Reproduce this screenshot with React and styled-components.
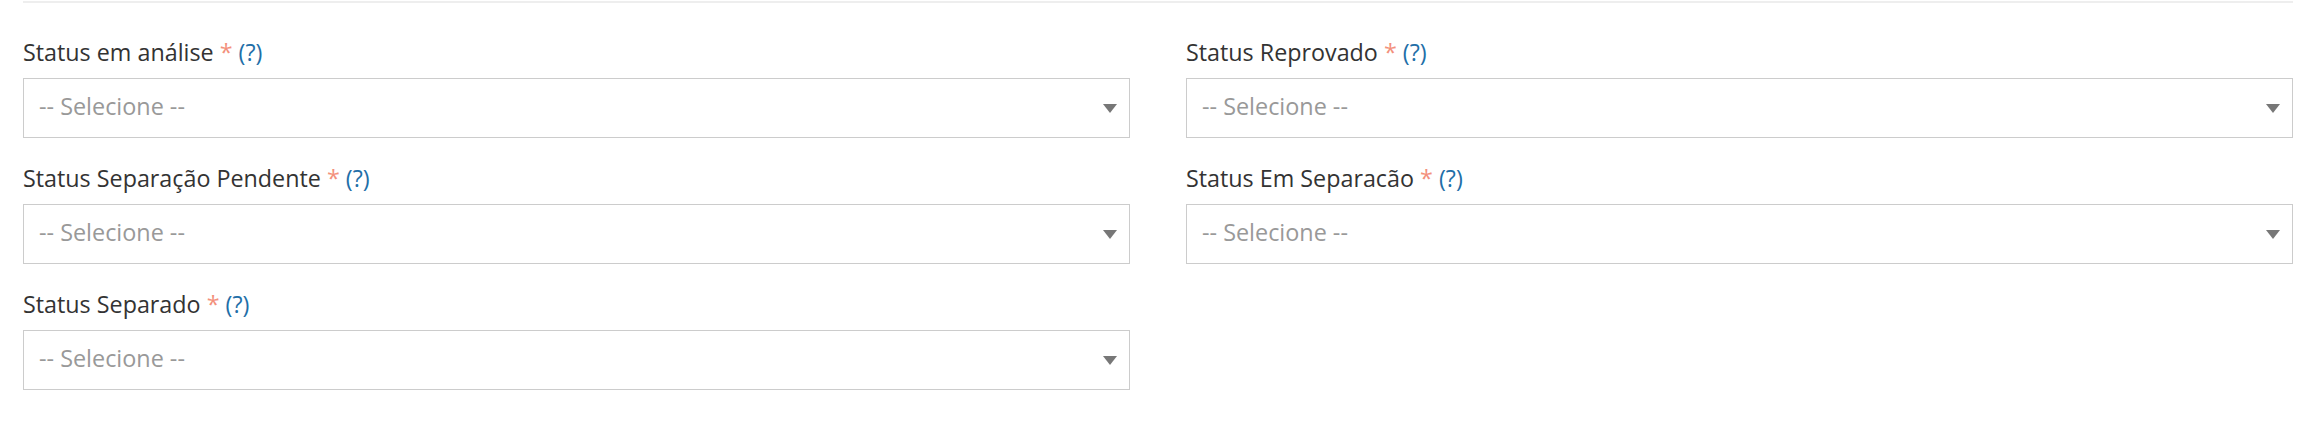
import React from 'react'
import styled, { createGlobalStyle } from 'styled-components'

const GlobalStyle = createGlobalStyle`
  html, body {
    margin: 0;
    padding: 0;
    background: #fff;
    font-family: "Open Sans", "Noto Sans", sans-serif;
  }
`

const fields = [
  'Status em análise',
  'Status Reprovado',
  'Status Separação Pendente',
  'Status Em Separacão',
  'Status Separado',
]

export default function App() {
  return (
    <>
      <GlobalStyle />
      <Page>
        <Divider />
        <Form>
          {fields.map((label) => (
            <Field key={label}>
              <Label>
                {label} <Required>*</Required> <Help>(?)</Help>
              </Label>
              <Select>
                <Placeholder>-- Selecione --</Placeholder>
                <Caret />
              </Select>
            </Field>
          ))}
        </Form>
      </Page>
    </>
  )
}

const Page = styled.div`
  width: 2270px;
  padding: 1px 17px 0 23px;
`

const Divider = styled.div`
  height: 2px;
  background: #eeeeee;
`

const Form = styled.div`
  display: grid;
  grid-template-columns: 1fr 1fr;
  column-gap: 56px;
  row-gap: 24px;
  padding-top: 33px;
`

const Field = styled.div`
  display: flex;
  flex-direction: column;
`

const Label = styled.label`
  font-size: 23.3px;
  line-height: 32px;
  color: #333333;
  margin-bottom: 10px;
  white-space: nowrap;
`

const Required = styled.span`
  color: #f3917c;
`

const Help = styled.span`
  color: #1f6fa8;
`

const Select = styled.div`
  box-sizing: border-box;
  height: 60px;
  border: 1.5px solid #cccccc;
  display: flex;
  align-items: center;
  justify-content: space-between;
  padding: 0 12px 0 15px;
`

const Placeholder = styled.span`
  font-size: 23.4px;
  line-height: 30px;
  padding-bottom: 5px;
  color: #999999;
`

const Caret = styled.span`
  width: 0;
  height: 0;
  border-left: 7px solid transparent;
  border-right: 7px solid transparent;
  border-top: 9px solid #777777;
`
